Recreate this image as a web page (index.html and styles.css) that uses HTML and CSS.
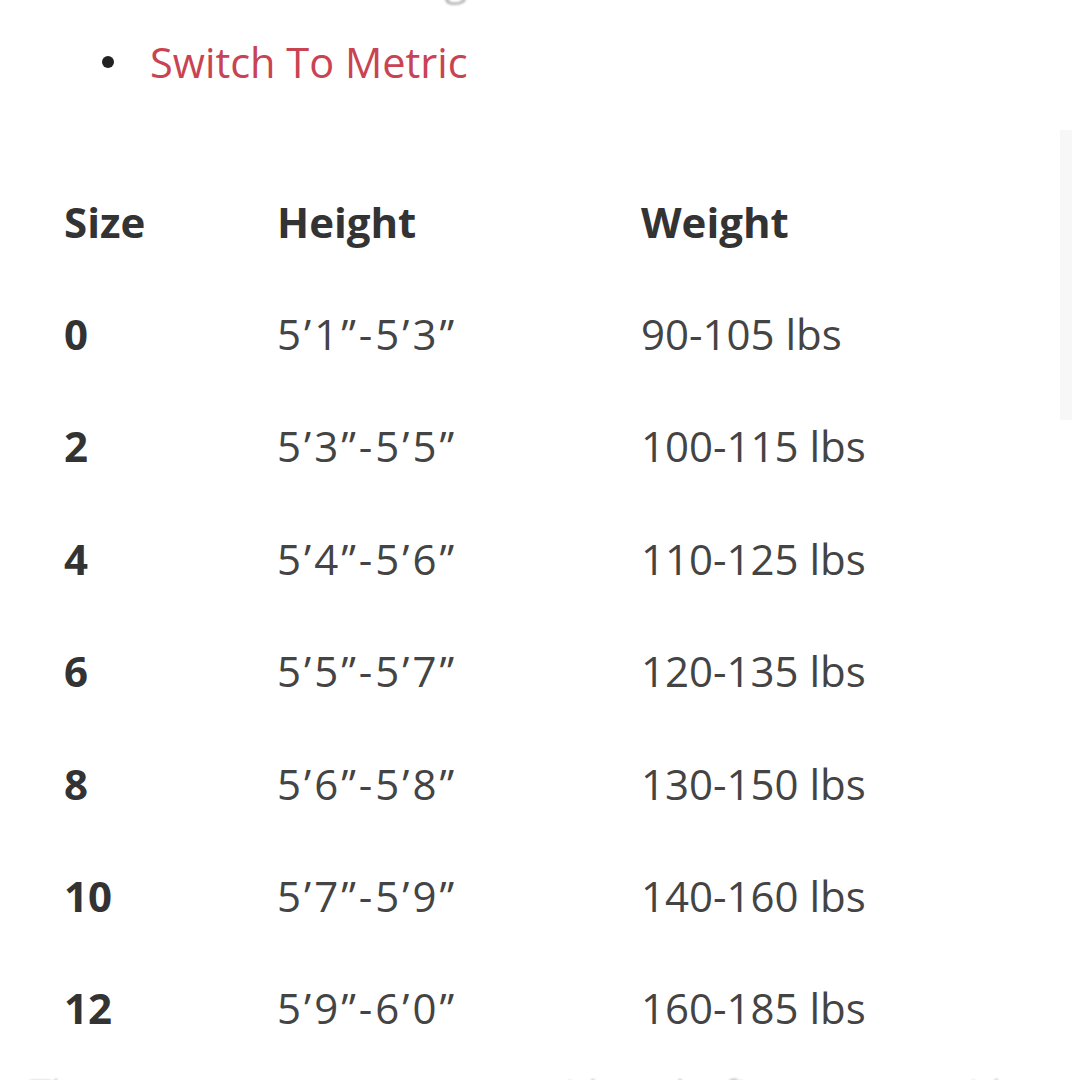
FILE: index.html
```html
<!DOCTYPE html>
<html>
<head>
<meta charset="utf-8">
<link rel="stylesheet" href="styles.css">
</head>
<body>
<div class="page">
  <div class="clip-top"><p class="cut-text">Recommended sizing chart for all dresses</p></div>
  <ul class="links">
    <li class="link-item"><span class="bullet"></span><a class="metric">Switch To Metric</a></li>
  </ul>
  <div class="chart">
    <div class="row head"><span>Size</span><span>Height</span><span>Weight</span></div>
    <div class="row"><span class="size">0</span><span class="ht">5’1”-5’3”</span><span>90-105 lbs</span></div>
    <div class="row"><span class="size">2</span><span class="ht">5’3”-5’5”</span><span>100-115 lbs</span></div>
    <div class="row"><span class="size">4</span><span class="ht">5’4”-5’6”</span><span>110-125 lbs</span></div>
    <div class="row"><span class="size">6</span><span class="ht">5’5”-5’7”</span><span>120-135 lbs</span></div>
    <div class="row"><span class="size">8</span><span class="ht">5’6”-5’8”</span><span>130-150 lbs</span></div>
    <div class="row"><span class="size">10</span><span class="ht">5’7”-5’9”</span><span>140-160 lbs</span></div>
    <div class="row"><span class="size">12</span><span class="ht">5’9”-6’0”</span><span>160-185 lbs</span></div>
  </div>
  <p class="cut-bottom">These measurements are a guide only, fit may vary with each style</p>
  <div class="scrollbar"></div>
</div>
</body>
</html>
```

FILE: styles.css
```css
html, body {
  margin: 0;
  padding: 0;
  background: #ffffff;
  height: 1080px;
  overflow: hidden;
}
.page {
  position: relative;
  width: 1080px;
  height: 1080px;
  overflow: hidden;
  font-family: "Open Sans", "DejaVu Sans", sans-serif;
  color: #404040;
}
.clip-top {
  height: 8px;
  overflow: hidden;
  padding-left: 50px;
}
.cut-text {
  margin: -51px 0 0 0;
  font-size: 42px;
  line-height: 60px;
  color: #b8b8b8;
  white-space: nowrap;
  filter: blur(1px);
}
.links {
  list-style: none;
  margin: 24px 0 0 0;
  padding: 0 0 0 102px;
}
.link-item {
  display: flex;
  align-items: center;
  gap: 36px;
  height: 60px;
}
.bullet {
  width: 12px;
  height: 12px;
  border-radius: 50%;
  background: #222;
}
.metric {
  font-size: 41.5px;
  color: #c94352;
}
.chart {
  margin: 73px 0 0 64px;
  display: flex;
  flex-direction: column;
}
.row {
  display: grid;
  grid-template-columns: 213px 364px 1fr;
  align-items: center;
  height: 112.4px;
  font-size: 42px;
  color: #444;
}
.row.head {
  font-weight: 700;
  color: #333;
}
.size {
  font-weight: 700;
  color: #333;
}
.ht {
  letter-spacing: 3px;
}
.cut-bottom {
  margin: 4px 0 0 30px;
  font-size: 38px;
  line-height: 50px;
  color: #c4c4c4;
  white-space: nowrap;
  filter: blur(1px);
}
.scrollbar {
  position: absolute;
  left: 1060px;
  top: 130px;
  width: 12px;
  height: 290px;
  background: #f7f7f7;
}
```
